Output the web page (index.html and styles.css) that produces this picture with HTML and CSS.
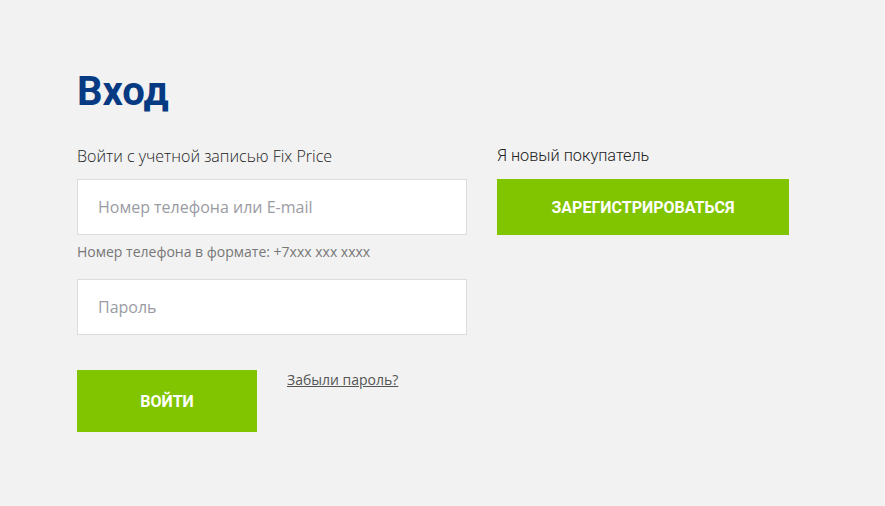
FILE: index.html
```html
<!DOCTYPE html>
<html lang="ru">
<head>
<meta charset="utf-8">
<link rel="stylesheet" href="styles.css">
</head>
<body>
<main class="page">
  <h1 class="title">Вход</h1>
  <div class="cols">
    <section class="login">
      <div class="label">Войти с учетной записью Fix Price</div>
      <input class="field" type="text" placeholder="Номер телефона или E-mail">
      <div class="hint">Номер телефона в формате: +7xxx xxx xxxx</div>
      <input class="field" type="password" placeholder="Пароль">
      <div class="actions">
        <button class="btn btn-login">ВОЙТИ</button>
        <a class="forgot" href="#">Забыли пароль?</a>
      </div>
    </section>
    <section class="register">
      <div class="label label-new">Я новый покупатель</div>
      <button class="btn btn-register">ЗАРЕГИСТРИРОВАТЬСЯ</button>
    </section>
  </div>
</main>
</body>
</html>
```
FILE: styles.css
```css
html, body {
  margin: 0;
  padding: 0;
  background: #f2f2f2;
}
body {
  font-family: "Open Sans", "Liberation Sans", sans-serif;
  color: #333;
}
.page {
  padding: 66px 0 0 77px;
}
.title {
  margin: 0;
  font-family: Roboto, "Liberation Sans", sans-serif;
  font-weight: 700;
  font-size: 40px;
  line-height: 52px;
  color: #063a82;
}
.cols {
  display: flex;
  gap: 30px;
  margin-top: 27px;
}
.login {
  width: 390px;
  display: flex;
  flex-direction: column;
}
.register {
  width: 292px;
  display: flex;
  flex-direction: column;
}
.label {
  font-size: 16px;
  font-weight: 300;
  line-height: 22px;
  color: #222;
  margin-bottom: 12px;
}
.label-new {
  font-family: Roboto, "Liberation Sans", sans-serif;
  font-weight: 300;
  font-size: 16.3px;
}
.field {
  box-sizing: border-box;
  width: 390px;
  height: 56px;
  border: 1px solid #dcdcdc;
  background: #fff;
  padding: 0 20px;
  font-family: "Open Sans", "Liberation Sans", sans-serif;
  font-size: 16px;
  color: #333;
  outline: none;
  margin: 0;
}
.field::placeholder {
  color: #9a9ba3;
}
.hint {
  font-size: 14px;
  line-height: 20px;
  color: #777;
  margin: 7px 0 17px;
}
.actions {
  display: flex;
  align-items: flex-start;
  gap: 30px;
  margin-top: 35px;
}
.btn {
  border: none;
  background: #80c500;
  color: #fff;
  font-family: Roboto, "Liberation Sans", sans-serif;
  font-weight: 700;
  cursor: pointer;
  padding: 0;
}
.btn-login {
  width: 180px;
  height: 62px;
  font-size: 16px;
}
.btn-register {
  width: 292px;
  height: 56px;
  font-size: 16px;
}
.forgot {
  font-size: 14px;
  line-height: 20px;
  color: #555;
  text-decoration: underline;
}
```
